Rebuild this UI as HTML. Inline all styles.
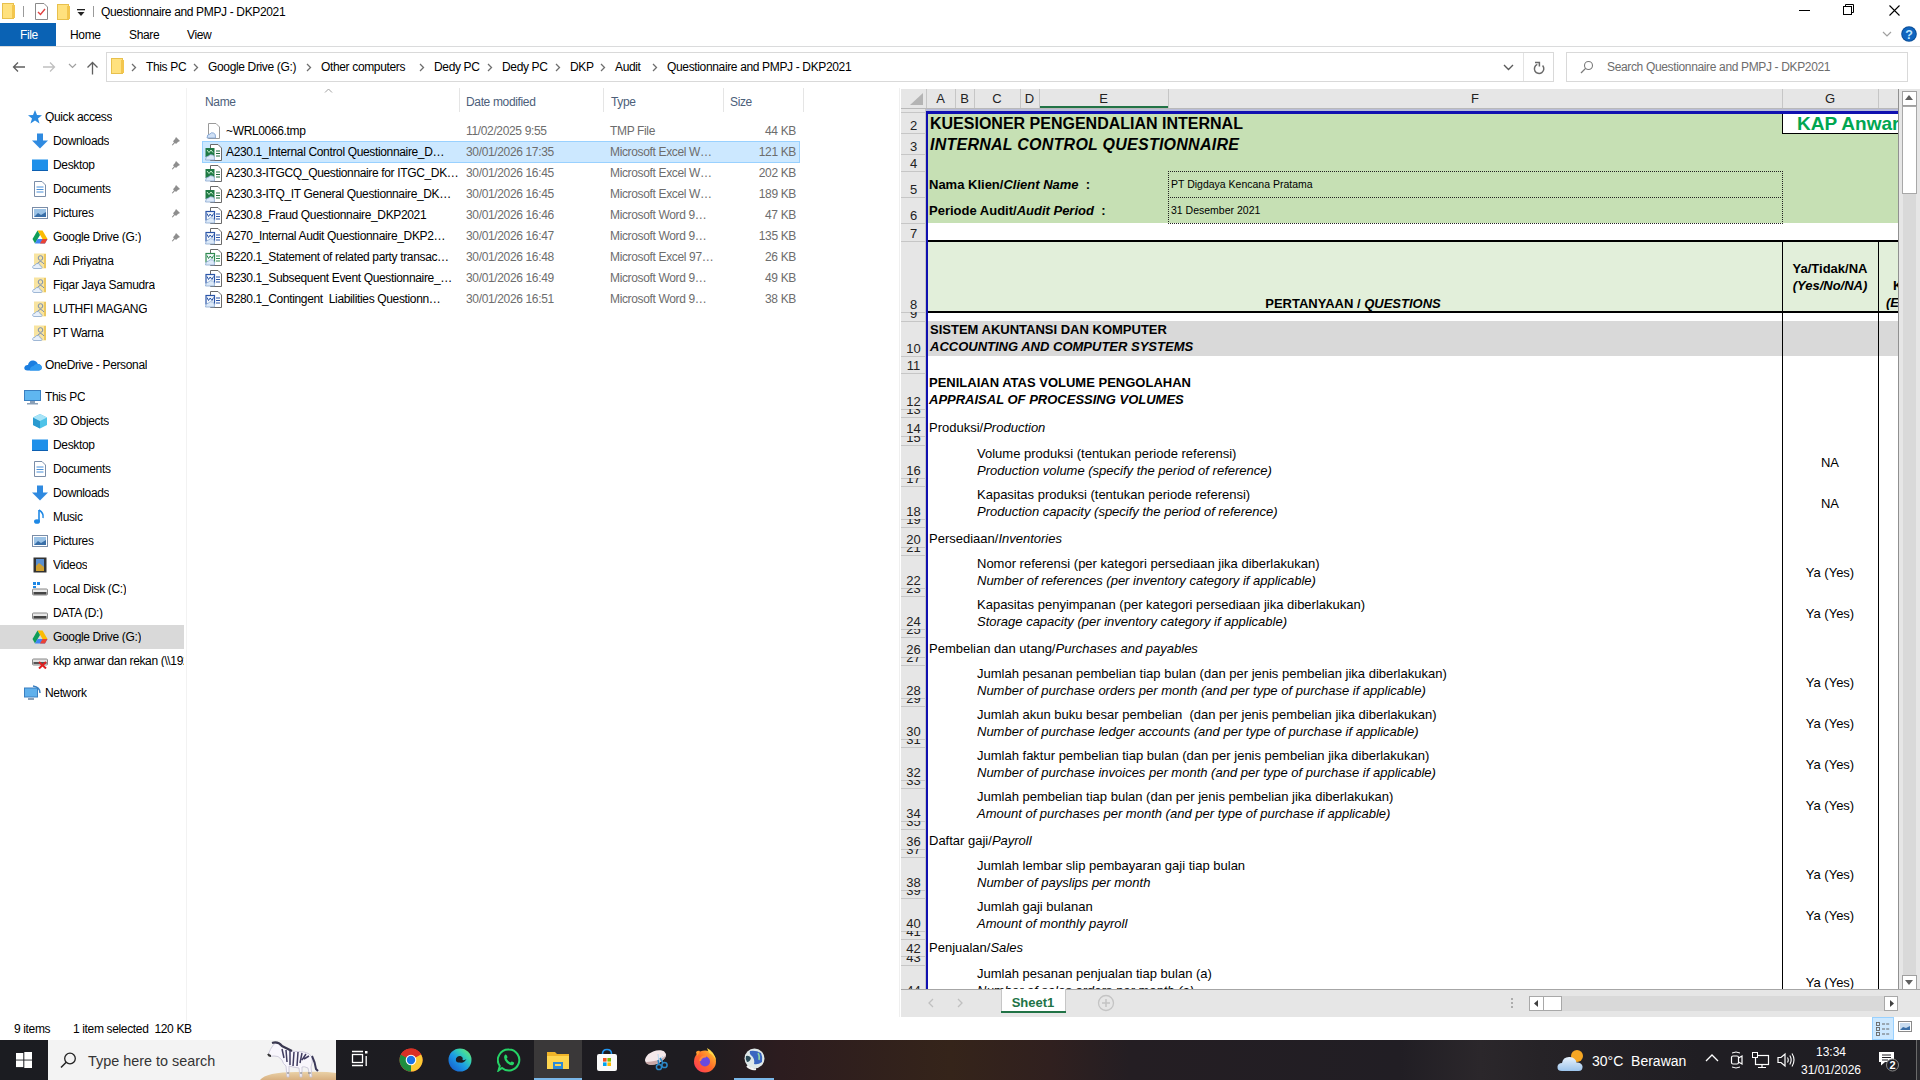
<!DOCTYPE html>
<html><head><meta charset="utf-8">
<style>
*{margin:0;padding:0;box-sizing:border-box}
html,body{width:1920px;height:1080px;overflow:hidden;background:#fff;font-family:"Liberation Sans",sans-serif;color:#000}
.a{position:absolute;white-space:nowrap}
.b{font-weight:bold}
.i{font-style:italic}
</style></head><body>
<svg class="a" style="left:2px;top:3px" width="14" height="16" viewBox="0 0 14 16"><rect x="0.5" y="0.5" width="11" height="15" fill="#ffe17e" stroke="#e8c04c"/><rect x="10" y="2" width="3" height="13" fill="#f3c64e"/></svg>
<div class="a" style="left:23px;top:6px;width:1px;height:11px;background:#9a9a9a"></div>
<svg class="a" style="left:35px;top:3px" width="13" height="17" viewBox="0 0 13 17"><path d="M0.5 0.5 H9 L12.5 4 V16.5 H0.5 Z" fill="#fff" stroke="#8a8a8a"/><path d="M3 9 L5.5 11.5 L10 6" stroke="#e04040" stroke-width="1.4" fill="none"/></svg>
<svg class="a" style="left:57px;top:4px" width="13" height="16" viewBox="0 0 13 16"><rect x="0.5" y="0.5" width="11" height="15" fill="#ffe17e" stroke="#e8c04c"/><rect x="10" y="2" width="3" height="13" fill="#f3c64e"/></svg>
<svg class="a" style="left:77px;top:9px" width="9" height="8" viewBox="0 0 9 8"><rect x="0" y="0" width="8" height="1.3" fill="#222"/><path d="M0.5 3 H7.5 L4 7 Z" fill="#222"/></svg>
<div class="a" style="left:93px;top:6px;width:1px;height:11px;background:#9a9a9a"></div>
<div class="a" style="left:101px;top:6.44px;font-size:12px;line-height:12px;letter-spacing:-0.35px;color:#000">Questionnaire and PMPJ - DKP2021</div>
<div class="a" style="left:1799px;top:10px;width:11px;height:1px;background:#000"></div>
<svg class="a" style="left:1843px;top:4px" width="12" height="12" viewBox="0 0 12 12"><rect x="0.5" y="2.5" width="8" height="8" fill="none" stroke="#000"/><path d="M2.5 2.5 V0.5 H10.5 V8.5 H8.5" fill="none" stroke="#000"/></svg>
<svg class="a" style="left:1889px;top:5px" width="12" height="12" viewBox="0 0 12 12"><path d="M0.5 0.5 L10.5 10.5 M10.5 0.5 L0.5 10.5" stroke="#000" stroke-width="1.1"/></svg>
<div class="a" style="left:0px;top:23px;width:56px;height:23px;background:#0a62b4"></div>
<div class="a" style="left:20px;top:29.44px;font-size:12px;line-height:12px;letter-spacing:-0.35px;color:#fff">File</div>
<div class="a" style="left:70px;top:29.44px;font-size:12px;line-height:12px;letter-spacing:-0.35px;">Home</div>
<div class="a" style="left:129px;top:29.44px;font-size:12px;line-height:12px;letter-spacing:-0.35px;">Share</div>
<div class="a" style="left:187px;top:29.44px;font-size:12px;line-height:12px;letter-spacing:-0.35px;">View</div>
<div class="a" style="left:0px;top:46px;width:1920px;height:1px;background:#dadbdc"></div>
<svg class="a" style="left:1882px;top:31px" width="10" height="7" viewBox="0 0 10 7"><path d="M1 1 L5 5 L9 1" stroke="#a0a0a0" stroke-width="1.2" fill="none"/></svg>
<svg class="a" style="left:1901px;top:26px" width="16" height="16" viewBox="0 0 16 16"><circle cx="8" cy="8" r="7.8" fill="#0a4e98"/><circle cx="8" cy="8" r="6.8" fill="#1066c0"/><text x="8" y="12.5" text-anchor="middle" font-family="Liberation Sans" font-weight="bold" font-size="12.5" fill="#bfe6ff">?</text></svg>
<svg class="a" style="left:12px;top:61px" width="14" height="12" viewBox="0 0 14 12"><path d="M13 6 H1.5 M6 1.5 L1.5 6 L6 10.5" stroke="#5f5f5f" stroke-width="1.3" fill="none"/></svg>
<svg class="a" style="left:42px;top:61px" width="14" height="12" viewBox="0 0 14 12"><path d="M1 6 H12.5 M8 1.5 L12.5 6 L8 10.5" stroke="#c0c0c0" stroke-width="1.3" fill="none"/></svg>
<svg class="a" style="left:68px;top:63px" width="9" height="6" viewBox="0 0 9 6"><path d="M1 1 L4.5 4.5 L8 1" stroke="#a0a0a0" stroke-width="1.2" fill="none"/></svg>
<svg class="a" style="left:86px;top:61px" width="13" height="14" viewBox="0 0 13 14"><path d="M6.5 13.5 V1.5 M1.5 6.5 L6.5 1.5 L11.5 6.5" stroke="#5f5f5f" stroke-width="1.3" fill="none"/></svg>
<div class="a" style="left:106px;top:52px;width:1448px;height:30px;border:1px solid #d9d9d9;background:#fff"></div>
<div class="a" style="left:1523px;top:53px;width:1px;height:28px;background:#e3e3e3"></div>
<svg class="a" style="left:111px;top:58px" width="14" height="16" viewBox="0 0 14 16"><rect x="0.5" y="0.5" width="11" height="15" fill="#ffe17e" stroke="#e8c04c"/><rect x="10" y="2" width="3" height="13" fill="#f3c64e"/></svg>
<svg class="a" style="left:131px;top:63px" width="6" height="9" viewBox="0 0 6 9"><path d="M1 1 L4.5 4.5 L1 8" stroke="#6e6e6e" stroke-width="1.3" fill="none"/></svg>
<div class="a" style="left:146px;top:61.44px;font-size:12px;line-height:12px;letter-spacing:-0.35px;color:#000">This PC</div>
<svg class="a" style="left:193px;top:63px" width="6" height="9" viewBox="0 0 6 9"><path d="M1 1 L4.5 4.5 L1 8" stroke="#6e6e6e" stroke-width="1.3" fill="none"/></svg>
<div class="a" style="left:208px;top:61.44px;font-size:12px;line-height:12px;letter-spacing:-0.35px;color:#000">Google Drive (G:)</div>
<svg class="a" style="left:306px;top:63px" width="6" height="9" viewBox="0 0 6 9"><path d="M1 1 L4.5 4.5 L1 8" stroke="#6e6e6e" stroke-width="1.3" fill="none"/></svg>
<div class="a" style="left:321px;top:61.44px;font-size:12px;line-height:12px;letter-spacing:-0.35px;color:#000">Other computers</div>
<svg class="a" style="left:419px;top:63px" width="6" height="9" viewBox="0 0 6 9"><path d="M1 1 L4.5 4.5 L1 8" stroke="#6e6e6e" stroke-width="1.3" fill="none"/></svg>
<div class="a" style="left:434px;top:61.44px;font-size:12px;line-height:12px;letter-spacing:-0.35px;color:#000">Dedy PC</div>
<svg class="a" style="left:487px;top:63px" width="6" height="9" viewBox="0 0 6 9"><path d="M1 1 L4.5 4.5 L1 8" stroke="#6e6e6e" stroke-width="1.3" fill="none"/></svg>
<div class="a" style="left:502px;top:61.44px;font-size:12px;line-height:12px;letter-spacing:-0.35px;color:#000">Dedy PC</div>
<svg class="a" style="left:555px;top:63px" width="6" height="9" viewBox="0 0 6 9"><path d="M1 1 L4.5 4.5 L1 8" stroke="#6e6e6e" stroke-width="1.3" fill="none"/></svg>
<div class="a" style="left:570px;top:61.44px;font-size:12px;line-height:12px;letter-spacing:-0.35px;color:#000">DKP</div>
<svg class="a" style="left:599.5px;top:63px" width="6" height="9" viewBox="0 0 6 9"><path d="M1 1 L4.5 4.5 L1 8" stroke="#6e6e6e" stroke-width="1.3" fill="none"/></svg>
<div class="a" style="left:615px;top:61.44px;font-size:12px;line-height:12px;letter-spacing:-0.35px;color:#000">Audit</div>
<svg class="a" style="left:652px;top:63px" width="6" height="9" viewBox="0 0 6 9"><path d="M1 1 L4.5 4.5 L1 8" stroke="#6e6e6e" stroke-width="1.3" fill="none"/></svg>
<div class="a" style="left:667px;top:61.44px;font-size:12px;line-height:12px;letter-spacing:-0.35px;color:#000">Questionnaire and PMPJ - DKP2021</div>
<svg class="a" style="left:1503px;top:64px" width="11" height="7" viewBox="0 0 11 7"><path d="M1 1 L5.5 5.5 L10 1" stroke="#5a5a5a" stroke-width="1.4" fill="none"/></svg>
<svg class="a" style="left:1528px;top:56px" width="24" height="24" viewBox="0 0 24 24"><path d="M9.3 8.4 A4.7 4.7 0 1 0 14.6 9.6" stroke="#6a6a6a" stroke-width="1.5" fill="none"/><path d="M7 6.4 H11.4 V10.6" stroke="#6a6a6a" stroke-width="1.5" fill="none"/></svg>
<div class="a" style="left:1566px;top:52px;width:342px;height:30px;border:1px solid #d9d9d9;background:#fff"></div>
<svg class="a" style="left:1580px;top:60px" width="14" height="14" viewBox="0 0 14 14"><circle cx="8.5" cy="5.5" r="4" stroke="#7a7a7a" stroke-width="1.1" fill="none"/><path d="M5.6 8.4 L1 13" stroke="#7a7a7a" stroke-width="1.3"/></svg>
<div class="a" style="left:1607px;top:61.44px;font-size:12px;line-height:12px;letter-spacing:-0.35px;color:#6d6d6d">Search Questionnaire and PMPJ - DKP2021</div>
<div class="a" style="left:0px;top:625px;width:184px;height:24px;background:#d9d9d9"></div>
<svg class="a" style="left:27px;top:109px" width="16" height="16" viewBox="0 0 16 16"><path d="M8 1 L10 6 L15 6.3 L11 9.5 L12.5 14.5 L8 11.5 L3.5 14.5 L5 9.5 L1 6.3 L6 6 Z" fill="#2a8ae0"/></svg>
<div class="a" style="left:45px;top:111.44px;font-size:12px;line-height:12px;letter-spacing:-0.35px;color:#000;max-width:139px;overflow:hidden">Quick access</div>
<svg class="a" style="left:32px;top:133px" width="16" height="16" viewBox="0 0 16 16"><rect x="5" y="0.5" width="6" height="8" fill="#2f8ae0"/><path d="M0 7.5 H16 L8 15.5 Z" fill="#2f8ae0"/></svg>
<div class="a" style="left:53px;top:135.44px;font-size:12px;line-height:12px;letter-spacing:-0.35px;color:#000;max-width:131px;overflow:hidden">Downloads</div>
<svg class="a" style="left:171px;top:136px" width="10" height="10" viewBox="0 0 10 10"><path d="M5 1 L9 5 L7 6 L5 8 L4 7 L1.5 9.5 L0.8 9 L3 6.3 L2 5.3 L4 3 Z" fill="#8e8e8e"/></svg>
<svg class="a" style="left:32px;top:157px" width="16" height="16" viewBox="0 0 16 16"><rect x="0" y="2.5" width="16" height="11.5" fill="#1e90ea"/><rect x="0" y="13" width="16" height="1" fill="#0d5fb0"/></svg>
<div class="a" style="left:53px;top:159.44px;font-size:12px;line-height:12px;letter-spacing:-0.35px;color:#000;max-width:131px;overflow:hidden">Desktop</div>
<svg class="a" style="left:171px;top:160px" width="10" height="10" viewBox="0 0 10 10"><path d="M5 1 L9 5 L7 6 L5 8 L4 7 L1.5 9.5 L0.8 9 L3 6.3 L2 5.3 L4 3 Z" fill="#8e8e8e"/></svg>
<svg class="a" style="left:32px;top:181px" width="16" height="16" viewBox="0 0 16 16"><path d="M2.5 0.5 H10 L13.5 4 V15.5 H2.5 Z" fill="#fff" stroke="#7a8da8"/><path d="M4.5 6 H11.5 M4.5 8.5 H11.5 M4.5 11 H11.5" stroke="#4a90d9" stroke-width="1"/></svg>
<div class="a" style="left:53px;top:183.44px;font-size:12px;line-height:12px;letter-spacing:-0.35px;color:#000;max-width:131px;overflow:hidden">Documents</div>
<svg class="a" style="left:171px;top:184px" width="10" height="10" viewBox="0 0 10 10"><path d="M5 1 L9 5 L7 6 L5 8 L4 7 L1.5 9.5 L0.8 9 L3 6.3 L2 5.3 L4 3 Z" fill="#8e8e8e"/></svg>
<svg class="a" style="left:32px;top:205px" width="16" height="16" viewBox="0 0 16 16"><rect x="0.5" y="2.5" width="15" height="11" fill="#fff" stroke="#7a8da8"/><rect x="2" y="4" width="12" height="8" fill="#9cc3e6"/><path d="M2 12 L6 8 L9 10 L14 7 V12 Z" fill="#3a6fa8"/></svg>
<div class="a" style="left:53px;top:207.44px;font-size:12px;line-height:12px;letter-spacing:-0.35px;color:#000;max-width:131px;overflow:hidden">Pictures</div>
<svg class="a" style="left:171px;top:208px" width="10" height="10" viewBox="0 0 10 10"><path d="M5 1 L9 5 L7 6 L5 8 L4 7 L1.5 9.5 L0.8 9 L3 6.3 L2 5.3 L4 3 Z" fill="#8e8e8e"/></svg>
<svg class="a" style="left:32px;top:229px" width="16" height="16" viewBox="0 0 16 16"><path d="M5.5 1.5 H10.5 L15.5 10 H10.5 Z" fill="#fbbc04"/><path d="M5.5 1.5 L0.5 10 L3 14.5 L8 6 Z" fill="#0f9d58"/><path d="M3 14.5 H13 L15.5 10 H5.5 Z" fill="#4285f4"/><path d="M10.5 10 H15.5 L13 14.5 H8 Z" fill="#ea4335"/></svg>
<div class="a" style="left:53px;top:231.44px;font-size:12px;line-height:12px;letter-spacing:-0.35px;color:#000;max-width:131px;overflow:hidden">Google Drive (G:)</div>
<svg class="a" style="left:171px;top:232px" width="10" height="10" viewBox="0 0 10 10"><path d="M5 1 L9 5 L7 6 L5 8 L4 7 L1.5 9.5 L0.8 9 L3 6.3 L2 5.3 L4 3 Z" fill="#8e8e8e"/></svg>
<svg class="a" style="left:32px;top:253px" width="16" height="16" viewBox="0 0 16 16"><rect x="2" y="0.5" width="12" height="15" fill="#f8e4a0"/><rect x="12" y="1" width="2" height="14" fill="#ecc860"/><circle cx="8.5" cy="5" r="2.3" fill="none" stroke="#7a8fb0" stroke-width="1"/><path d="M5 11 Q8.5 6 12 11" fill="none" stroke="#7a8fb0" stroke-width="1"/><path d="M1.5 15.5 Q0.5 15.5 0.8 13.5 Q1.2 12 3 12.3 Q3.8 10 6.2 10.5 Q8.2 11 8.3 13 Q10 13 10 14.5 Q10 15.5 9 15.5 Z" fill="#e8f0fa" stroke="#8aa8d0" stroke-width="0.8"/></svg>
<div class="a" style="left:53px;top:255.44px;font-size:12px;line-height:12px;letter-spacing:-0.35px;color:#000;max-width:131px;overflow:hidden">Adi Priyatna</div>
<svg class="a" style="left:32px;top:277px" width="16" height="16" viewBox="0 0 16 16"><rect x="2" y="0.5" width="12" height="15" fill="#f8e4a0"/><rect x="12" y="1" width="2" height="14" fill="#ecc860"/><circle cx="8.5" cy="5" r="2.3" fill="none" stroke="#7a8fb0" stroke-width="1"/><path d="M5 11 Q8.5 6 12 11" fill="none" stroke="#7a8fb0" stroke-width="1"/><path d="M1.5 15.5 Q0.5 15.5 0.8 13.5 Q1.2 12 3 12.3 Q3.8 10 6.2 10.5 Q8.2 11 8.3 13 Q10 13 10 14.5 Q10 15.5 9 15.5 Z" fill="#e8f0fa" stroke="#8aa8d0" stroke-width="0.8"/></svg>
<div class="a" style="left:53px;top:279.44px;font-size:12px;line-height:12px;letter-spacing:-0.35px;color:#000;max-width:131px;overflow:hidden">Figar Jaya Samudra</div>
<svg class="a" style="left:32px;top:301px" width="16" height="16" viewBox="0 0 16 16"><rect x="2" y="0.5" width="12" height="15" fill="#f8e4a0"/><rect x="12" y="1" width="2" height="14" fill="#ecc860"/><circle cx="8.5" cy="5" r="2.3" fill="none" stroke="#7a8fb0" stroke-width="1"/><path d="M5 11 Q8.5 6 12 11" fill="none" stroke="#7a8fb0" stroke-width="1"/><path d="M1.5 15.5 Q0.5 15.5 0.8 13.5 Q1.2 12 3 12.3 Q3.8 10 6.2 10.5 Q8.2 11 8.3 13 Q10 13 10 14.5 Q10 15.5 9 15.5 Z" fill="#e8f0fa" stroke="#8aa8d0" stroke-width="0.8"/></svg>
<div class="a" style="left:53px;top:303.44px;font-size:12px;line-height:12px;letter-spacing:-0.35px;color:#000;max-width:131px;overflow:hidden">LUTHFI MAGANG</div>
<svg class="a" style="left:32px;top:325px" width="16" height="16" viewBox="0 0 16 16"><rect x="2" y="0.5" width="12" height="15" fill="#f8e4a0"/><rect x="12" y="1" width="2" height="14" fill="#ecc860"/><circle cx="8.5" cy="5" r="2.3" fill="none" stroke="#7a8fb0" stroke-width="1"/><path d="M5 11 Q8.5 6 12 11" fill="none" stroke="#7a8fb0" stroke-width="1"/><path d="M1.5 15.5 Q0.5 15.5 0.8 13.5 Q1.2 12 3 12.3 Q3.8 10 6.2 10.5 Q8.2 11 8.3 13 Q10 13 10 14.5 Q10 15.5 9 15.5 Z" fill="#e8f0fa" stroke="#8aa8d0" stroke-width="0.8"/></svg>
<div class="a" style="left:53px;top:327.44px;font-size:12px;line-height:12px;letter-spacing:-0.35px;color:#000;max-width:131px;overflow:hidden">PT Warna</div>
<svg class="a" style="left:24px;top:357px" width="18" height="16" viewBox="0 0 18 16"><path d="M3.5 13.5 Q0 13.5 0.3 10.5 Q0.8 7.5 4 8 Q5 3 9.5 3.5 Q13 4 13.8 7 Q17.5 7 17.8 10.5 Q17.8 13.5 14.5 13.5 Z" fill="#1a7ee0"/><path d="M6 13.5 Q5.5 9.5 9.5 9 Q11 6.5 14 7.2 Q17.5 7.5 17.8 10.5 Q17.8 13.5 14.5 13.5 Z" fill="#2f9af0"/></svg>
<div class="a" style="left:45px;top:359.44px;font-size:12px;line-height:12px;letter-spacing:-0.35px;color:#000;max-width:139px;overflow:hidden">OneDrive - Personal</div>
<svg class="a" style="left:24px;top:389px" width="17" height="16" viewBox="0 0 17 16"><rect x="0.5" y="1.5" width="16" height="10" fill="#5fb6f0" stroke="#3a7fc0"/><rect x="6" y="12" width="5" height="2" fill="#8aa0b8"/><rect x="3" y="14" width="11" height="1.5" fill="#8aa0b8"/></svg>
<div class="a" style="left:45px;top:391.44px;font-size:12px;line-height:12px;letter-spacing:-0.35px;color:#000;max-width:139px;overflow:hidden">This PC</div>
<svg class="a" style="left:32px;top:413px" width="16" height="16" viewBox="0 0 16 16"><path d="M8 1 L15 4.5 V12 L8 15.5 L1 12 V4.5 Z" fill="#4fc3e8"/><path d="M8 8 V15.5 L1 12 V4.5 Z" fill="#2a9ad0"/><path d="M8 1 L15 4.5 L8 8 L1 4.5 Z" fill="#a8e4f8"/></svg>
<div class="a" style="left:53px;top:415.44px;font-size:12px;line-height:12px;letter-spacing:-0.35px;color:#000;max-width:131px;overflow:hidden">3D Objects</div>
<svg class="a" style="left:32px;top:437px" width="16" height="16" viewBox="0 0 16 16"><rect x="0" y="2.5" width="16" height="11.5" fill="#1e90ea"/><rect x="0" y="13" width="16" height="1" fill="#0d5fb0"/></svg>
<div class="a" style="left:53px;top:439.44px;font-size:12px;line-height:12px;letter-spacing:-0.35px;color:#000;max-width:131px;overflow:hidden">Desktop</div>
<svg class="a" style="left:32px;top:461px" width="16" height="16" viewBox="0 0 16 16"><path d="M2.5 0.5 H10 L13.5 4 V15.5 H2.5 Z" fill="#fff" stroke="#7a8da8"/><path d="M4.5 6 H11.5 M4.5 8.5 H11.5 M4.5 11 H11.5" stroke="#4a90d9" stroke-width="1"/></svg>
<div class="a" style="left:53px;top:463.44px;font-size:12px;line-height:12px;letter-spacing:-0.35px;color:#000;max-width:131px;overflow:hidden">Documents</div>
<svg class="a" style="left:32px;top:485px" width="16" height="16" viewBox="0 0 16 16"><rect x="5" y="0.5" width="6" height="8" fill="#2f8ae0"/><path d="M0 7.5 H16 L8 15.5 Z" fill="#2f8ae0"/></svg>
<div class="a" style="left:53px;top:487.44px;font-size:12px;line-height:12px;letter-spacing:-0.35px;color:#000;max-width:131px;overflow:hidden">Downloads</div>
<svg class="a" style="left:32px;top:509px" width="16" height="16" viewBox="0 0 16 16"><path d="M7 1 V12" stroke="#1e88e5" stroke-width="1.6"/><ellipse cx="5" cy="12.5" rx="3" ry="2.3" fill="#1e88e5"/><path d="M7 1 Q12 4 11 9" stroke="#1e88e5" stroke-width="1.5" fill="none"/></svg>
<div class="a" style="left:53px;top:511.44px;font-size:12px;line-height:12px;letter-spacing:-0.35px;color:#000;max-width:131px;overflow:hidden">Music</div>
<svg class="a" style="left:32px;top:533px" width="16" height="16" viewBox="0 0 16 16"><rect x="0.5" y="2.5" width="15" height="11" fill="#fff" stroke="#7a8da8"/><rect x="2" y="4" width="12" height="8" fill="#9cc3e6"/><path d="M2 12 L6 8 L9 10 L14 7 V12 Z" fill="#3a6fa8"/></svg>
<div class="a" style="left:53px;top:535.44px;font-size:12px;line-height:12px;letter-spacing:-0.35px;color:#000;max-width:131px;overflow:hidden">Pictures</div>
<svg class="a" style="left:32px;top:557px" width="16" height="16" viewBox="0 0 16 16"><rect x="1.5" y="0.5" width="13" height="15" fill="#333"/><rect x="4" y="2" width="8" height="12" fill="#5a8fd0"/><path d="M4 9 L7 6 L12 10 V14 H4Z" fill="#d0a030"/></svg>
<div class="a" style="left:53px;top:559.44px;font-size:12px;line-height:12px;letter-spacing:-0.35px;color:#000;max-width:131px;overflow:hidden">Videos</div>
<svg class="a" style="left:32px;top:581px" width="16" height="16" viewBox="0 0 16 16"><rect x="0.5" y="8" width="15" height="6" rx="1" fill="#e8e8e8" stroke="#888"/><rect x="1.5" y="11" width="13" height="2.5" fill="#444"/><rect x="1" y="1" width="3" height="3" fill="#1e88e5"/><rect x="5" y="1" width="3" height="3" fill="#1e88e5"/><rect x="1" y="5" width="3" height="2" fill="#1e88e5"/></svg>
<div class="a" style="left:53px;top:583.44px;font-size:12px;line-height:12px;letter-spacing:-0.35px;color:#000;max-width:131px;overflow:hidden">Local Disk (C:)</div>
<svg class="a" style="left:32px;top:605px" width="16" height="16" viewBox="0 0 16 16"><rect x="0.5" y="8" width="15" height="6" rx="1" fill="#e8e8e8" stroke="#888"/><rect x="1.5" y="11" width="13" height="2.5" fill="#444"/></svg>
<div class="a" style="left:53px;top:607.44px;font-size:12px;line-height:12px;letter-spacing:-0.35px;color:#000;max-width:131px;overflow:hidden">DATA (D:)</div>
<svg class="a" style="left:32px;top:629px" width="16" height="16" viewBox="0 0 16 16"><path d="M5.5 1.5 H10.5 L15.5 10 H10.5 Z" fill="#fbbc04"/><path d="M5.5 1.5 L0.5 10 L3 14.5 L8 6 Z" fill="#0f9d58"/><path d="M3 14.5 H13 L15.5 10 H5.5 Z" fill="#4285f4"/><path d="M10.5 10 H15.5 L13 14.5 H8 Z" fill="#ea4335"/></svg>
<div class="a" style="left:53px;top:631.44px;font-size:12px;line-height:12px;letter-spacing:-0.35px;color:#000;max-width:131px;overflow:hidden">Google Drive (G:)</div>
<svg class="a" style="left:32px;top:653px" width="16" height="16" viewBox="0 0 16 16"><rect x="0.5" y="6" width="15" height="6" rx="1" fill="#e0e0e0" stroke="#888"/><rect x="1.5" y="9" width="13" height="2" fill="#555"/><path d="M7 9 L14 15.5 M14 9 L7 15.5" stroke="#e02020" stroke-width="2"/></svg>
<div class="a" style="left:53px;top:655.44px;font-size:12px;line-height:12px;letter-spacing:-0.35px;color:#000;max-width:131px;overflow:hidden">kkp anwar dan rekan (\\192.168</div>
<svg class="a" style="left:24px;top:685px" width="18" height="16" viewBox="0 0 18 16"><rect x="0.5" y="3" width="13" height="9" fill="#5fb0ec" stroke="#3a7fc0"/><path d="M9 1 Q16 2 16 8" stroke="#3a7fc0" stroke-width="1.5" fill="none"/><rect x="4" y="13" width="6" height="2" fill="#8aa0b8"/></svg>
<div class="a" style="left:45px;top:687.44px;font-size:12px;line-height:12px;letter-spacing:-0.35px;color:#000;max-width:139px;overflow:hidden">Network</div>
<div class="a" style="left:186px;top:88px;width:1px;height:940px;background:#f2f2f2"></div>
<div class="a" style="left:205px;top:96.44px;font-size:12px;line-height:12px;letter-spacing:-0.35px;color:#4c607a">Name</div>
<div class="a" style="left:466px;top:96.44px;font-size:12px;line-height:12px;letter-spacing:-0.35px;color:#4c607a">Date modified</div>
<div class="a" style="left:611px;top:96.44px;font-size:12px;line-height:12px;letter-spacing:-0.35px;color:#4c607a">Type</div>
<div class="a" style="left:730px;top:96.44px;font-size:12px;line-height:12px;letter-spacing:-0.35px;color:#4c607a">Size</div>
<div class="a" style="left:459px;top:88px;width:1px;height:24px;background:#e5e5e5"></div>
<div class="a" style="left:603px;top:88px;width:1px;height:24px;background:#e5e5e5"></div>
<div class="a" style="left:723px;top:88px;width:1px;height:24px;background:#e5e5e5"></div>
<div class="a" style="left:803px;top:88px;width:1px;height:24px;background:#e5e5e5"></div>
<div class="a" style="left:899px;top:88px;width:1px;height:929px;background:#efefef"></div>
<svg class="a" style="left:324px;top:88px" width="9" height="5" viewBox="0 0 9 5"><path d="M1 4.5 L4.5 1 L8 4.5" stroke="#a0a0a0" stroke-width="1" fill="none"/></svg>
<div class="a" style="left:202px;top:141px;width:598px;height:22px;background:#cce8ff;border:1px solid #99d1ff"></div>
<svg class="a" style="left:206px;top:122.5px" width="16" height="16" viewBox="0 0 16 16"><path d="M2.5 0.5 H10 L13.5 4 V15.5 H2.5 Z" fill="#fff" stroke="#9a9a9a"/><path d="M1 15 Q1 11 4 11 Q5 9 7.5 10 Q10 10.5 9.5 15 Z" fill="#cfe0f5" stroke="#7a9ccc" stroke-width="0.8"/></svg>
<div class="a" style="left:226px;top:124.94px;font-size:12px;line-height:12px;letter-spacing:-0.35px;color:#000">~WRL0066.tmp</div>
<div class="a" style="left:466px;top:124.94px;font-size:12px;line-height:12px;letter-spacing:-0.35px;color:#6d6d6d">11/02/2025 9:55</div>
<div class="a" style="left:610px;top:124.94px;font-size:12px;line-height:12px;letter-spacing:-0.35px;color:#6d6d6d">TMP File</div>
<div class="a" style="left:596px;top:124.94px;width:200px;text-align:right;font-size:12px;line-height:12px;letter-spacing:-0.35px;color:#6d6d6d">44 KB</div>
<svg class="a" style="left:204px;top:143.5px" width="18" height="17" viewBox="0 0 18 17"><path d="M6.5 0.5 H14 L17.5 4 V16.5 H6.5 Z" fill="#fff" stroke="#6a6a6a"/><path d="M12 7 H16 M12 9.5 H16 M12 12 H16" stroke="#1d6a3a" stroke-width="1.1"/><rect x="1.5" y="4" width="9" height="9" fill="#1f7a44"/><path d="M3 6 L5 8.5 L7 6 L9 8.5" stroke="#c8f0d0" stroke-width="1" fill="none"/><path d="M1.5 16 Q1.5 12 4.5 12 Q6 10 8.5 11 Q11 11.5 10.5 16 Z" fill="#dce9f8" stroke="#8aa8d0" stroke-width="0.8"/></svg>
<div class="a" style="left:226px;top:145.94px;font-size:12px;line-height:12px;letter-spacing:-0.35px;color:#000">A230.1_Internal Control Questionnaire_D…</div>
<div class="a" style="left:466px;top:145.94px;font-size:12px;line-height:12px;letter-spacing:-0.35px;color:#6d6d6d">30/01/2026 17:35</div>
<div class="a" style="left:610px;top:145.94px;font-size:12px;line-height:12px;letter-spacing:-0.35px;color:#6d6d6d">Microsoft Excel W…</div>
<div class="a" style="left:596px;top:145.94px;width:200px;text-align:right;font-size:12px;line-height:12px;letter-spacing:-0.35px;color:#6d6d6d">121 KB</div>
<svg class="a" style="left:204px;top:164.5px" width="18" height="17" viewBox="0 0 18 17"><path d="M6.5 0.5 H14 L17.5 4 V16.5 H6.5 Z" fill="#fff" stroke="#6a6a6a"/><path d="M12 7 H16 M12 9.5 H16 M12 12 H16" stroke="#1d6a3a" stroke-width="1.1"/><rect x="1.5" y="4" width="9" height="9" fill="#1f7a44"/><path d="M3 6 L5 8.5 L7 6 L9 8.5" stroke="#c8f0d0" stroke-width="1" fill="none"/><path d="M1.5 16 Q1.5 12 4.5 12 Q6 10 8.5 11 Q11 11.5 10.5 16 Z" fill="#dce9f8" stroke="#8aa8d0" stroke-width="0.8"/></svg>
<div class="a" style="left:226px;top:166.94px;font-size:12px;line-height:12px;letter-spacing:-0.35px;color:#000">A230.3-ITGCQ_Questionnaire for ITGC_DK…</div>
<div class="a" style="left:466px;top:166.94px;font-size:12px;line-height:12px;letter-spacing:-0.35px;color:#6d6d6d">30/01/2026 16:45</div>
<div class="a" style="left:610px;top:166.94px;font-size:12px;line-height:12px;letter-spacing:-0.35px;color:#6d6d6d">Microsoft Excel W…</div>
<div class="a" style="left:596px;top:166.94px;width:200px;text-align:right;font-size:12px;line-height:12px;letter-spacing:-0.35px;color:#6d6d6d">202 KB</div>
<svg class="a" style="left:204px;top:185.5px" width="18" height="17" viewBox="0 0 18 17"><path d="M6.5 0.5 H14 L17.5 4 V16.5 H6.5 Z" fill="#fff" stroke="#6a6a6a"/><path d="M12 7 H16 M12 9.5 H16 M12 12 H16" stroke="#1d6a3a" stroke-width="1.1"/><rect x="1.5" y="4" width="9" height="9" fill="#1f7a44"/><path d="M3 6 L5 8.5 L7 6 L9 8.5" stroke="#c8f0d0" stroke-width="1" fill="none"/><path d="M1.5 16 Q1.5 12 4.5 12 Q6 10 8.5 11 Q11 11.5 10.5 16 Z" fill="#dce9f8" stroke="#8aa8d0" stroke-width="0.8"/></svg>
<div class="a" style="left:226px;top:187.94px;font-size:12px;line-height:12px;letter-spacing:-0.35px;color:#000">A230.3-ITQ_IT General Questionnaire_DK…</div>
<div class="a" style="left:466px;top:187.94px;font-size:12px;line-height:12px;letter-spacing:-0.35px;color:#6d6d6d">30/01/2026 16:45</div>
<div class="a" style="left:610px;top:187.94px;font-size:12px;line-height:12px;letter-spacing:-0.35px;color:#6d6d6d">Microsoft Excel W…</div>
<div class="a" style="left:596px;top:187.94px;width:200px;text-align:right;font-size:12px;line-height:12px;letter-spacing:-0.35px;color:#6d6d6d">189 KB</div>
<svg class="a" style="left:204px;top:206.5px" width="18" height="17" viewBox="0 0 18 17"><path d="M6.5 0.5 H14 L17.5 4 V16.5 H6.5 Z" fill="#fff" stroke="#6a6a6a"/><path d="M12 7 H16 M12 9.5 H16 M12 12 H16" stroke="#2a55a8" stroke-width="1.1"/><rect x="2" y="4.5" width="8.5" height="8.5" fill="#f4f8fc" stroke="#2a55a8" stroke-width="1.2"/><path d="M3 6.5 L4.5 9.5 L6.2 7 L8 9.5 L9.5 6.5" stroke="#2a55a8" stroke-width="1" fill="none"/><path d="M1.5 16 Q1.5 12 4.5 12 Q6 10 8.5 11 Q11 11.5 10.5 16 Z" fill="#dce9f8" stroke="#8aa8d0" stroke-width="0.8"/></svg>
<div class="a" style="left:226px;top:208.94px;font-size:12px;line-height:12px;letter-spacing:-0.35px;color:#000">A230.8_Fraud Questionnaire_DKP2021</div>
<div class="a" style="left:466px;top:208.94px;font-size:12px;line-height:12px;letter-spacing:-0.35px;color:#6d6d6d">30/01/2026 16:46</div>
<div class="a" style="left:610px;top:208.94px;font-size:12px;line-height:12px;letter-spacing:-0.35px;color:#6d6d6d">Microsoft Word 9…</div>
<div class="a" style="left:596px;top:208.94px;width:200px;text-align:right;font-size:12px;line-height:12px;letter-spacing:-0.35px;color:#6d6d6d">47 KB</div>
<svg class="a" style="left:204px;top:227.5px" width="18" height="17" viewBox="0 0 18 17"><path d="M6.5 0.5 H14 L17.5 4 V16.5 H6.5 Z" fill="#fff" stroke="#6a6a6a"/><path d="M12 7 H16 M12 9.5 H16 M12 12 H16" stroke="#2a55a8" stroke-width="1.1"/><rect x="2" y="4.5" width="8.5" height="8.5" fill="#f4f8fc" stroke="#2a55a8" stroke-width="1.2"/><path d="M3 6.5 L4.5 9.5 L6.2 7 L8 9.5 L9.5 6.5" stroke="#2a55a8" stroke-width="1" fill="none"/><path d="M1.5 16 Q1.5 12 4.5 12 Q6 10 8.5 11 Q11 11.5 10.5 16 Z" fill="#dce9f8" stroke="#8aa8d0" stroke-width="0.8"/></svg>
<div class="a" style="left:226px;top:229.94px;font-size:12px;line-height:12px;letter-spacing:-0.35px;color:#000">A270_Internal Audit Questionnaire_DKP2…</div>
<div class="a" style="left:466px;top:229.94px;font-size:12px;line-height:12px;letter-spacing:-0.35px;color:#6d6d6d">30/01/2026 16:47</div>
<div class="a" style="left:610px;top:229.94px;font-size:12px;line-height:12px;letter-spacing:-0.35px;color:#6d6d6d">Microsoft Word 9…</div>
<div class="a" style="left:596px;top:229.94px;width:200px;text-align:right;font-size:12px;line-height:12px;letter-spacing:-0.35px;color:#6d6d6d">135 KB</div>
<svg class="a" style="left:204px;top:248.5px" width="18" height="17" viewBox="0 0 18 17"><path d="M6.5 0.5 H14 L17.5 4 V16.5 H6.5 Z" fill="#fff" stroke="#6a6a6a"/><path d="M12 7 H16 M12 9.5 H16 M12 12 H16" stroke="#2f8a50" stroke-width="1.1"/><rect x="2" y="4.5" width="8.5" height="8.5" fill="#f4f8fc" stroke="#2f8a50" stroke-width="1.2"/><path d="M3 6.5 L4.5 9.5 L6.2 7 L8 9.5 L9.5 6.5" stroke="#2f8a50" stroke-width="1" fill="none"/><path d="M1.5 16 Q1.5 12 4.5 12 Q6 10 8.5 11 Q11 11.5 10.5 16 Z" fill="#dce9f8" stroke="#8aa8d0" stroke-width="0.8"/></svg>
<div class="a" style="left:226px;top:250.94px;font-size:12px;line-height:12px;letter-spacing:-0.35px;color:#000">B220.1_Statement of related party transac…</div>
<div class="a" style="left:466px;top:250.94px;font-size:12px;line-height:12px;letter-spacing:-0.35px;color:#6d6d6d">30/01/2026 16:48</div>
<div class="a" style="left:610px;top:250.94px;font-size:12px;line-height:12px;letter-spacing:-0.35px;color:#6d6d6d">Microsoft Excel 97…</div>
<div class="a" style="left:596px;top:250.94px;width:200px;text-align:right;font-size:12px;line-height:12px;letter-spacing:-0.35px;color:#6d6d6d">26 KB</div>
<svg class="a" style="left:204px;top:269.5px" width="18" height="17" viewBox="0 0 18 17"><path d="M6.5 0.5 H14 L17.5 4 V16.5 H6.5 Z" fill="#fff" stroke="#6a6a6a"/><path d="M12 7 H16 M12 9.5 H16 M12 12 H16" stroke="#2a55a8" stroke-width="1.1"/><rect x="2" y="4.5" width="8.5" height="8.5" fill="#f4f8fc" stroke="#2a55a8" stroke-width="1.2"/><path d="M3 6.5 L4.5 9.5 L6.2 7 L8 9.5 L9.5 6.5" stroke="#2a55a8" stroke-width="1" fill="none"/><path d="M1.5 16 Q1.5 12 4.5 12 Q6 10 8.5 11 Q11 11.5 10.5 16 Z" fill="#dce9f8" stroke="#8aa8d0" stroke-width="0.8"/></svg>
<div class="a" style="left:226px;top:271.94px;font-size:12px;line-height:12px;letter-spacing:-0.35px;color:#000">B230.1_Subsequent Event Questionnaire_…</div>
<div class="a" style="left:466px;top:271.94px;font-size:12px;line-height:12px;letter-spacing:-0.35px;color:#6d6d6d">30/01/2026 16:49</div>
<div class="a" style="left:610px;top:271.94px;font-size:12px;line-height:12px;letter-spacing:-0.35px;color:#6d6d6d">Microsoft Word 9…</div>
<div class="a" style="left:596px;top:271.94px;width:200px;text-align:right;font-size:12px;line-height:12px;letter-spacing:-0.35px;color:#6d6d6d">49 KB</div>
<svg class="a" style="left:204px;top:290.5px" width="18" height="17" viewBox="0 0 18 17"><path d="M6.5 0.5 H14 L17.5 4 V16.5 H6.5 Z" fill="#fff" stroke="#6a6a6a"/><path d="M12 7 H16 M12 9.5 H16 M12 12 H16" stroke="#2a55a8" stroke-width="1.1"/><rect x="2" y="4.5" width="8.5" height="8.5" fill="#f4f8fc" stroke="#2a55a8" stroke-width="1.2"/><path d="M3 6.5 L4.5 9.5 L6.2 7 L8 9.5 L9.5 6.5" stroke="#2a55a8" stroke-width="1" fill="none"/><path d="M1.5 16 Q1.5 12 4.5 12 Q6 10 8.5 11 Q11 11.5 10.5 16 Z" fill="#dce9f8" stroke="#8aa8d0" stroke-width="0.8"/></svg>
<div class="a" style="left:226px;top:292.94px;font-size:12px;line-height:12px;letter-spacing:-0.35px;color:#000">B280.1_Contingent&nbsp; Liabilities Questionn…</div>
<div class="a" style="left:466px;top:292.94px;font-size:12px;line-height:12px;letter-spacing:-0.35px;color:#6d6d6d">30/01/2026 16:51</div>
<div class="a" style="left:610px;top:292.94px;font-size:12px;line-height:12px;letter-spacing:-0.35px;color:#6d6d6d">Microsoft Word 9…</div>
<div class="a" style="left:596px;top:292.94px;width:200px;text-align:right;font-size:12px;line-height:12px;letter-spacing:-0.35px;color:#6d6d6d">38 KB</div>
<div class="a" style="left:14px;top:1022.94px;font-size:12px;line-height:12px;letter-spacing:-0.35px;color:#000">9 items</div>
<div class="a" style="left:73px;top:1022.94px;font-size:12px;line-height:12px;letter-spacing:-0.35px;color:#000">1 item selected&nbsp; 120 KB</div>
<div class="a" style="left:1872px;top:1017px;width:22px;height:23px;background:#cce8ff;border:1px solid #99d1ff"></div>
<svg class="a" style="left:1875px;top:1021px" width="16" height="16" viewBox="0 0 16 16"><rect x="1.5" y="1.5" width="3" height="3" fill="none" stroke="#666" stroke-width="0.9"/><rect x="1.5" y="6.5" width="3" height="3" fill="none" stroke="#666" stroke-width="0.9"/><rect x="1.5" y="11.5" width="3" height="3" fill="none" stroke="#666" stroke-width="0.9"/><path d="M7 3 H15 M7 8 H15 M7 13 H15" stroke="#666" stroke-width="1" stroke-dasharray="3 1.2"/></svg>
<svg class="a" style="left:1898px;top:1021px" width="15" height="12" viewBox="0 0 15 12"><rect x="0.5" y="0.5" width="13" height="10" fill="#fff" stroke="#8a8a8a"/><rect x="2" y="2" width="10" height="7" fill="#c8dcf0"/><path d="M2 9 L5 6 L8 7 L12 5 V9 Z" fill="#3a6fa8"/></svg>
<div class="a" style="left:0;top:0;width:1898px;height:989px;overflow:hidden">
<div class="a" style="left:901px;top:89px;width:997px;height:20px;background:#e6e6e6"></div>
<div class="a" style="left:901px;top:108px;width:997px;height:1px;background:#b9b9b9"></div>
<div class="a" style="left:1039px;top:106px;width:129px;height:2px;background:#217346"></div>
<div class="a" style="left:926px;top:89px;width:1px;height:19px;background:#c6c6c6"></div>
<div class="a" style="left:955px;top:89px;width:1px;height:19px;background:#c6c6c6"></div>
<div class="a" style="left:974px;top:89px;width:1px;height:19px;background:#c6c6c6"></div>
<div class="a" style="left:1020px;top:89px;width:1px;height:19px;background:#c6c6c6"></div>
<div class="a" style="left:1039px;top:89px;width:1px;height:19px;background:#c6c6c6"></div>
<div class="a" style="left:1168px;top:89px;width:1px;height:19px;background:#c6c6c6"></div>
<div class="a" style="left:1782px;top:89px;width:1px;height:19px;background:#c6c6c6"></div>
<div class="a" style="left:1878px;top:89px;width:1px;height:19px;background:#c6c6c6"></div>
<svg class="a" style="left:908px;top:92px" width="16" height="14"><polygon points="15,1 15,13 2,13" fill="#b4b4b4"/></svg>
<div class="a " style="left:840.5px;top:92.00px;width:200px;text-align:center;font-size:13px;line-height:13px;color:#222">A</div>
<div class="a " style="left:864.5px;top:92.00px;width:200px;text-align:center;font-size:13px;line-height:13px;color:#222">B</div>
<div class="a " style="left:897.0px;top:92.00px;width:200px;text-align:center;font-size:13px;line-height:13px;color:#222">C</div>
<div class="a " style="left:929.5px;top:92.00px;width:200px;text-align:center;font-size:13px;line-height:13px;color:#222">D</div>
<div class="a " style="left:1003.5px;top:92.00px;width:200px;text-align:center;font-size:13px;line-height:13px;color:#222">E</div>
<div class="a " style="left:1375.0px;top:92.00px;width:200px;text-align:center;font-size:13px;line-height:13px;color:#222">F</div>
<div class="a " style="left:1730.0px;top:92.00px;width:200px;text-align:center;font-size:13px;line-height:13px;color:#222">G</div>
<div class="a" style="left:901px;top:109px;width:25px;height:880px;background:#e6e6e6"></div>
<div class="a" style="left:925px;top:109px;width:1px;height:880px;background:#c6c6c6"></div>
<div class="a" style="left:901px;top:133px;width:25px;height:1px;background:#c6c6c6"></div>
<div class="a" style="left:901px;top:111px;width:25px;height:21px;overflow:hidden"><div class="a" style="left:0;top:8px;width:25px;text-align:center;font-size:13px;line-height:13px;color:#222">2</div></div>
<div class="a" style="left:901px;top:154px;width:25px;height:1px;background:#c6c6c6"></div>
<div class="a" style="left:901px;top:133px;width:25px;height:20px;overflow:hidden"><div class="a" style="left:0;top:7px;width:25px;text-align:center;font-size:13px;line-height:13px;color:#222">3</div></div>
<div class="a" style="left:901px;top:171px;width:25px;height:1px;background:#c6c6c6"></div>
<div class="a" style="left:901px;top:154px;width:25px;height:16px;overflow:hidden"><div class="a" style="left:0;top:3px;width:25px;text-align:center;font-size:13px;line-height:13px;color:#222">4</div></div>
<div class="a" style="left:901px;top:197px;width:25px;height:1px;background:#c6c6c6"></div>
<div class="a" style="left:901px;top:171px;width:25px;height:25px;overflow:hidden"><div class="a" style="left:0;top:12px;width:25px;text-align:center;font-size:13px;line-height:13px;color:#222">5</div></div>
<div class="a" style="left:901px;top:223px;width:25px;height:1px;background:#c6c6c6"></div>
<div class="a" style="left:901px;top:197px;width:25px;height:25px;overflow:hidden"><div class="a" style="left:0;top:12px;width:25px;text-align:center;font-size:13px;line-height:13px;color:#222">6</div></div>
<div class="a" style="left:901px;top:241px;width:25px;height:1px;background:#c6c6c6"></div>
<div class="a" style="left:901px;top:223px;width:25px;height:17px;overflow:hidden"><div class="a" style="left:0;top:4px;width:25px;text-align:center;font-size:13px;line-height:13px;color:#222">7</div></div>
<div class="a" style="left:901px;top:312px;width:25px;height:1px;background:#c6c6c6"></div>
<div class="a" style="left:901px;top:241px;width:25px;height:70px;overflow:hidden"><div class="a" style="left:0;top:57px;width:25px;text-align:center;font-size:13px;line-height:13px;color:#222">8</div></div>
<div class="a" style="left:901px;top:321px;width:25px;height:1px;background:#c6c6c6"></div>
<div class="a" style="left:901px;top:312px;width:25px;height:8px;overflow:hidden"><div class="a" style="left:0;top:-5px;width:25px;text-align:center;font-size:13px;line-height:13px;color:#222">9</div></div>
<div class="a" style="left:901px;top:356px;width:25px;height:1px;background:#c6c6c6"></div>
<div class="a" style="left:901px;top:321px;width:25px;height:34px;overflow:hidden"><div class="a" style="left:0;top:21px;width:25px;text-align:center;font-size:13px;line-height:13px;color:#222">10</div></div>
<div class="a" style="left:901px;top:373px;width:25px;height:1px;background:#c6c6c6"></div>
<div class="a" style="left:901px;top:356px;width:25px;height:16px;overflow:hidden"><div class="a" style="left:0;top:3px;width:25px;text-align:center;font-size:13px;line-height:13px;color:#222">11</div></div>
<div class="a" style="left:901px;top:409px;width:25px;height:1px;background:#c6c6c6"></div>
<div class="a" style="left:901px;top:373px;width:25px;height:35px;overflow:hidden"><div class="a" style="left:0;top:22px;width:25px;text-align:center;font-size:13px;line-height:13px;color:#222">12</div></div>
<div class="a" style="left:901px;top:417px;width:25px;height:1px;background:#c6c6c6"></div>
<div class="a" style="left:901px;top:409px;width:25px;height:7px;overflow:hidden"><div class="a" style="left:0;top:-6px;width:25px;text-align:center;font-size:13px;line-height:13px;color:#222">13</div></div>
<div class="a" style="left:901px;top:436px;width:25px;height:1px;background:#c6c6c6"></div>
<div class="a" style="left:901px;top:417px;width:25px;height:18px;overflow:hidden"><div class="a" style="left:0;top:5px;width:25px;text-align:center;font-size:13px;line-height:13px;color:#222">14</div></div>
<div class="a" style="left:901px;top:445px;width:25px;height:1px;background:#c6c6c6"></div>
<div class="a" style="left:901px;top:436px;width:25px;height:8px;overflow:hidden"><div class="a" style="left:0;top:-5px;width:25px;text-align:center;font-size:13px;line-height:13px;color:#222">15</div></div>
<div class="a" style="left:901px;top:478px;width:25px;height:1px;background:#c6c6c6"></div>
<div class="a" style="left:901px;top:445px;width:25px;height:32px;overflow:hidden"><div class="a" style="left:0;top:19px;width:25px;text-align:center;font-size:13px;line-height:13px;color:#222">16</div></div>
<div class="a" style="left:901px;top:486px;width:25px;height:1px;background:#c6c6c6"></div>
<div class="a" style="left:901px;top:478px;width:25px;height:7px;overflow:hidden"><div class="a" style="left:0;top:-6px;width:25px;text-align:center;font-size:13px;line-height:13px;color:#222">17</div></div>
<div class="a" style="left:901px;top:519px;width:25px;height:1px;background:#c6c6c6"></div>
<div class="a" style="left:901px;top:486px;width:25px;height:32px;overflow:hidden"><div class="a" style="left:0;top:19px;width:25px;text-align:center;font-size:13px;line-height:13px;color:#222">18</div></div>
<div class="a" style="left:901px;top:527px;width:25px;height:1px;background:#c6c6c6"></div>
<div class="a" style="left:901px;top:519px;width:25px;height:7px;overflow:hidden"><div class="a" style="left:0;top:-6px;width:25px;text-align:center;font-size:13px;line-height:13px;color:#222">19</div></div>
<div class="a" style="left:901px;top:547px;width:25px;height:1px;background:#c6c6c6"></div>
<div class="a" style="left:901px;top:527px;width:25px;height:19px;overflow:hidden"><div class="a" style="left:0;top:6px;width:25px;text-align:center;font-size:13px;line-height:13px;color:#222">20</div></div>
<div class="a" style="left:901px;top:555px;width:25px;height:1px;background:#c6c6c6"></div>
<div class="a" style="left:901px;top:547px;width:25px;height:7px;overflow:hidden"><div class="a" style="left:0;top:-6px;width:25px;text-align:center;font-size:13px;line-height:13px;color:#222">21</div></div>
<div class="a" style="left:901px;top:588px;width:25px;height:1px;background:#c6c6c6"></div>
<div class="a" style="left:901px;top:555px;width:25px;height:32px;overflow:hidden"><div class="a" style="left:0;top:19px;width:25px;text-align:center;font-size:13px;line-height:13px;color:#222">22</div></div>
<div class="a" style="left:901px;top:596px;width:25px;height:1px;background:#c6c6c6"></div>
<div class="a" style="left:901px;top:588px;width:25px;height:7px;overflow:hidden"><div class="a" style="left:0;top:-6px;width:25px;text-align:center;font-size:13px;line-height:13px;color:#222">23</div></div>
<div class="a" style="left:901px;top:629px;width:25px;height:1px;background:#c6c6c6"></div>
<div class="a" style="left:901px;top:596px;width:25px;height:32px;overflow:hidden"><div class="a" style="left:0;top:19px;width:25px;text-align:center;font-size:13px;line-height:13px;color:#222">24</div></div>
<div class="a" style="left:901px;top:637px;width:25px;height:1px;background:#c6c6c6"></div>
<div class="a" style="left:901px;top:629px;width:25px;height:7px;overflow:hidden"><div class="a" style="left:0;top:-6px;width:25px;text-align:center;font-size:13px;line-height:13px;color:#222">25</div></div>
<div class="a" style="left:901px;top:657px;width:25px;height:1px;background:#c6c6c6"></div>
<div class="a" style="left:901px;top:637px;width:25px;height:19px;overflow:hidden"><div class="a" style="left:0;top:6px;width:25px;text-align:center;font-size:13px;line-height:13px;color:#222">26</div></div>
<div class="a" style="left:901px;top:665px;width:25px;height:1px;background:#c6c6c6"></div>
<div class="a" style="left:901px;top:657px;width:25px;height:7px;overflow:hidden"><div class="a" style="left:0;top:-6px;width:25px;text-align:center;font-size:13px;line-height:13px;color:#222">27</div></div>
<div class="a" style="left:901px;top:698px;width:25px;height:1px;background:#c6c6c6"></div>
<div class="a" style="left:901px;top:665px;width:25px;height:32px;overflow:hidden"><div class="a" style="left:0;top:19px;width:25px;text-align:center;font-size:13px;line-height:13px;color:#222">28</div></div>
<div class="a" style="left:901px;top:706px;width:25px;height:1px;background:#c6c6c6"></div>
<div class="a" style="left:901px;top:698px;width:25px;height:7px;overflow:hidden"><div class="a" style="left:0;top:-6px;width:25px;text-align:center;font-size:13px;line-height:13px;color:#222">29</div></div>
<div class="a" style="left:901px;top:739px;width:25px;height:1px;background:#c6c6c6"></div>
<div class="a" style="left:901px;top:706px;width:25px;height:32px;overflow:hidden"><div class="a" style="left:0;top:19px;width:25px;text-align:center;font-size:13px;line-height:13px;color:#222">30</div></div>
<div class="a" style="left:901px;top:747px;width:25px;height:1px;background:#c6c6c6"></div>
<div class="a" style="left:901px;top:739px;width:25px;height:7px;overflow:hidden"><div class="a" style="left:0;top:-6px;width:25px;text-align:center;font-size:13px;line-height:13px;color:#222">31</div></div>
<div class="a" style="left:901px;top:780px;width:25px;height:1px;background:#c6c6c6"></div>
<div class="a" style="left:901px;top:747px;width:25px;height:32px;overflow:hidden"><div class="a" style="left:0;top:19px;width:25px;text-align:center;font-size:13px;line-height:13px;color:#222">32</div></div>
<div class="a" style="left:901px;top:788px;width:25px;height:1px;background:#c6c6c6"></div>
<div class="a" style="left:901px;top:780px;width:25px;height:7px;overflow:hidden"><div class="a" style="left:0;top:-6px;width:25px;text-align:center;font-size:13px;line-height:13px;color:#222">33</div></div>
<div class="a" style="left:901px;top:821px;width:25px;height:1px;background:#c6c6c6"></div>
<div class="a" style="left:901px;top:788px;width:25px;height:32px;overflow:hidden"><div class="a" style="left:0;top:19px;width:25px;text-align:center;font-size:13px;line-height:13px;color:#222">34</div></div>
<div class="a" style="left:901px;top:829px;width:25px;height:1px;background:#c6c6c6"></div>
<div class="a" style="left:901px;top:821px;width:25px;height:7px;overflow:hidden"><div class="a" style="left:0;top:-6px;width:25px;text-align:center;font-size:13px;line-height:13px;color:#222">35</div></div>
<div class="a" style="left:901px;top:849px;width:25px;height:1px;background:#c6c6c6"></div>
<div class="a" style="left:901px;top:829px;width:25px;height:19px;overflow:hidden"><div class="a" style="left:0;top:6px;width:25px;text-align:center;font-size:13px;line-height:13px;color:#222">36</div></div>
<div class="a" style="left:901px;top:857px;width:25px;height:1px;background:#c6c6c6"></div>
<div class="a" style="left:901px;top:849px;width:25px;height:7px;overflow:hidden"><div class="a" style="left:0;top:-6px;width:25px;text-align:center;font-size:13px;line-height:13px;color:#222">37</div></div>
<div class="a" style="left:901px;top:890px;width:25px;height:1px;background:#c6c6c6"></div>
<div class="a" style="left:901px;top:857px;width:25px;height:32px;overflow:hidden"><div class="a" style="left:0;top:19px;width:25px;text-align:center;font-size:13px;line-height:13px;color:#222">38</div></div>
<div class="a" style="left:901px;top:898px;width:25px;height:1px;background:#c6c6c6"></div>
<div class="a" style="left:901px;top:890px;width:25px;height:7px;overflow:hidden"><div class="a" style="left:0;top:-6px;width:25px;text-align:center;font-size:13px;line-height:13px;color:#222">39</div></div>
<div class="a" style="left:901px;top:931px;width:25px;height:1px;background:#c6c6c6"></div>
<div class="a" style="left:901px;top:898px;width:25px;height:32px;overflow:hidden"><div class="a" style="left:0;top:19px;width:25px;text-align:center;font-size:13px;line-height:13px;color:#222">40</div></div>
<div class="a" style="left:901px;top:939px;width:25px;height:1px;background:#c6c6c6"></div>
<div class="a" style="left:901px;top:931px;width:25px;height:7px;overflow:hidden"><div class="a" style="left:0;top:-6px;width:25px;text-align:center;font-size:13px;line-height:13px;color:#222">41</div></div>
<div class="a" style="left:901px;top:956px;width:25px;height:1px;background:#c6c6c6"></div>
<div class="a" style="left:901px;top:939px;width:25px;height:16px;overflow:hidden"><div class="a" style="left:0;top:3px;width:25px;text-align:center;font-size:13px;line-height:13px;color:#222">42</div></div>
<div class="a" style="left:901px;top:965px;width:25px;height:1px;background:#c6c6c6"></div>
<div class="a" style="left:901px;top:956px;width:25px;height:8px;overflow:hidden"><div class="a" style="left:0;top:-5px;width:25px;text-align:center;font-size:13px;line-height:13px;color:#222">43</div></div>
<div class="a" style="left:901px;top:998px;width:25px;height:1px;background:#c6c6c6"></div>
<div class="a" style="left:901px;top:965px;width:25px;height:32px;overflow:hidden"><div class="a" style="left:0;top:19px;width:25px;text-align:center;font-size:13px;line-height:13px;color:#222">44</div></div>
<div class="a" style="left:928px;top:113px;width:970px;height:110px;background:#c6e0b4"></div>
<div class="a" style="left:1782px;top:114px;width:116px;height:20px;background:#fff;border-left:1px solid #000;border-bottom:1px solid #000"></div>
<div class="a b" style="left:1797px;top:113.92px;font-size:19px;line-height:19px;color:#00a651">KAP Anwar dan Rekan</div>
<div class="a" style="left:1168px;top:171px;width:615px;height:27px;border:1px dotted #222"></div>
<div class="a" style="left:1168px;top:197px;width:615px;height:27px;border:1px dotted #222"></div>
<div class="a" style="left:928px;top:241px;width:970px;height:71px;background:#e2efda"></div>
<div class="a" style="left:928px;top:240px;width:970px;height:2px;background:#000"></div>
<div class="a" style="left:928px;top:311px;width:970px;height:2px;background:#000"></div>
<div class="a" style="left:928px;top:321px;width:970px;height:35px;background:#d9d9d9"></div>
<div class="a" style="left:1782px;top:241px;width:1px;height:748px;background:#000"></div>
<div class="a" style="left:1878px;top:241px;width:1px;height:748px;background:#000"></div>
<div class="a" style="left:926px;top:109px;width:972px;height:2px;background:#b8bcd8"></div>
<div class="a" style="left:901px;top:112px;width:25px;height:1px;background:#c6c6c6"></div>
<div class="a" style="left:926px;top:111px;width:972px;height:3px;background:#1010b0"></div>
<div class="a" style="left:926px;top:111px;width:2px;height:878px;background:#1010b0"></div>
<div class="a b" style="left:930px;top:116.46px;font-size:16px;line-height:16px;">KUESIONER PENGENDALIAN INTERNAL</div>
<div class="a b i" style="left:930px;top:137.46px;font-size:16px;line-height:16px;letter-spacing:0.25px">INTERNAL CONTROL QUESTIONNAIRE</div>
<div class="a b" style="left:929px;top:178.00px;font-size:13px;line-height:13px;">Nama Klien/<i>Client Name</i>&nbsp; :</div>
<div class="a b" style="left:929px;top:204.00px;font-size:13px;line-height:13px;">Periode Audit/<i>Audit Period</i>&nbsp; :</div>
<div class="a " style="left:1171px;top:179.11px;font-size:10.5px;line-height:10.5px;">PT Digdaya Kencana Pratama</div>
<div class="a " style="left:1171px;top:205.11px;font-size:10.5px;line-height:10.5px;">31 Desember 2021</div>
<div class="a b" style="left:1153.0px;top:297.00px;width:400px;text-align:center;font-size:13px;line-height:13px;">PERTANYAAN / <i>QUESTIONS</i></div>
<div class="a b" style="left:1730.0px;top:262.00px;width:200px;text-align:center;font-size:13px;line-height:13px;">Ya/Tidak/NA</div>
<div class="a b" style="left:1730.0px;top:279.00px;width:200px;text-align:center;font-size:13px;line-height:13px;"><i>(Yes/No/NA)</i></div>
<div class="a b" style="left:1893px;top:279.00px;font-size:13px;line-height:13px;">Keterangan</div>
<div class="a b" style="left:1886px;top:296.00px;font-size:13px;line-height:13px;"><i>(Explanation)</i></div>
<div class="a b" style="left:930px;top:323.00px;font-size:13px;line-height:13px;">SISTEM AKUNTANSI DAN KOMPUTER</div>
<div class="a b i" style="left:930px;top:339.50px;font-size:13px;line-height:13px;">ACCOUNTING AND COMPUTER SYSTEMS</div>
<div class="a b" style="left:929px;top:376.00px;font-size:13px;line-height:13px;">PENILAIAN ATAS VOLUME PENGOLAHAN</div>
<div class="a b i" style="left:929px;top:393.00px;font-size:13px;line-height:13px;">APPRAISAL OF PROCESSING VOLUMES</div>
<div class="a " style="left:929px;top:420.50px;font-size:13px;line-height:13px;">Produksi/<i>Production</i></div>
<div class="a " style="left:977px;top:446.70px;font-size:13px;line-height:13px;">Volume produksi (tentukan periode referensi)</div>
<div class="a i" style="left:977px;top:463.50px;font-size:13px;line-height:13px;">Production volume (specify the period of reference)</div>
<div class="a " style="left:1730.0px;top:455.80px;width:200px;text-align:center;font-size:13px;line-height:13px;">NA</div>
<div class="a " style="left:977px;top:487.70px;font-size:13px;line-height:13px;">Kapasitas produksi (tentukan periode referensi)</div>
<div class="a i" style="left:977px;top:504.50px;font-size:13px;line-height:13px;">Production capacity (specify the period of reference)</div>
<div class="a " style="left:1730.0px;top:496.80px;width:200px;text-align:center;font-size:13px;line-height:13px;">NA</div>
<div class="a " style="left:929px;top:531.50px;font-size:13px;line-height:13px;">Persediaan/<i>Inventories</i></div>
<div class="a " style="left:977px;top:556.70px;font-size:13px;line-height:13px;">Nomor referensi (per kategori persediaan jika diberlakukan)</div>
<div class="a i" style="left:977px;top:573.50px;font-size:13px;line-height:13px;">Number of references (per inventory category if applicable)</div>
<div class="a " style="left:1730.0px;top:565.80px;width:200px;text-align:center;font-size:13px;line-height:13px;">Ya (Yes)</div>
<div class="a " style="left:977px;top:597.70px;font-size:13px;line-height:13px;">Kapasitas penyimpanan (per kategori persediaan jika diberlakukan)</div>
<div class="a i" style="left:977px;top:614.50px;font-size:13px;line-height:13px;">Storage capacity (per inventory category if applicable)</div>
<div class="a " style="left:1730.0px;top:606.80px;width:200px;text-align:center;font-size:13px;line-height:13px;">Ya (Yes)</div>
<div class="a " style="left:929px;top:641.50px;font-size:13px;line-height:13px;">Pembelian dan utang/<i>Purchases and payables</i></div>
<div class="a " style="left:977px;top:666.70px;font-size:13px;line-height:13px;">Jumlah pesanan pembelian tiap bulan (dan per jenis pembelian jika diberlakukan)</div>
<div class="a i" style="left:977px;top:683.50px;font-size:13px;line-height:13px;">Number of purchase orders per month (and per type of purchase if applicable)</div>
<div class="a " style="left:1730.0px;top:675.80px;width:200px;text-align:center;font-size:13px;line-height:13px;">Ya (Yes)</div>
<div class="a " style="left:977px;top:707.70px;font-size:13px;line-height:13px;">Jumlah akun buku besar pembelian&nbsp; (dan per jenis pembelian jika diberlakukan)</div>
<div class="a i" style="left:977px;top:724.50px;font-size:13px;line-height:13px;">Number of purchase ledger accounts (and per type of purchase if applicable)</div>
<div class="a " style="left:1730.0px;top:716.80px;width:200px;text-align:center;font-size:13px;line-height:13px;">Ya (Yes)</div>
<div class="a " style="left:977px;top:748.70px;font-size:13px;line-height:13px;">Jumlah faktur pembelian tiap bulan (dan per jenis pembelian jika diberlakukan)</div>
<div class="a i" style="left:977px;top:765.50px;font-size:13px;line-height:13px;">Number of purchase invoices per month (and per type of purchase if applicable)</div>
<div class="a " style="left:1730.0px;top:757.80px;width:200px;text-align:center;font-size:13px;line-height:13px;">Ya (Yes)</div>
<div class="a " style="left:977px;top:789.70px;font-size:13px;line-height:13px;">Jumlah pembelian tiap bulan (dan per jenis pembelian jika diberlakukan)</div>
<div class="a i" style="left:977px;top:806.50px;font-size:13px;line-height:13px;">Amount of purchases per month (and per type of purchase if applicable)</div>
<div class="a " style="left:1730.0px;top:798.80px;width:200px;text-align:center;font-size:13px;line-height:13px;">Ya (Yes)</div>
<div class="a " style="left:929px;top:833.50px;font-size:13px;line-height:13px;">Daftar gaji/<i>Payroll</i></div>
<div class="a " style="left:977px;top:858.70px;font-size:13px;line-height:13px;">Jumlah lembar slip pembayaran gaji tiap bulan</div>
<div class="a i" style="left:977px;top:875.50px;font-size:13px;line-height:13px;">Number of payslips per month</div>
<div class="a " style="left:1730.0px;top:867.80px;width:200px;text-align:center;font-size:13px;line-height:13px;">Ya (Yes)</div>
<div class="a " style="left:977px;top:899.70px;font-size:13px;line-height:13px;">Jumlah gaji bulanan</div>
<div class="a i" style="left:977px;top:916.50px;font-size:13px;line-height:13px;">Amount of monthly payroll</div>
<div class="a " style="left:1730.0px;top:908.80px;width:200px;text-align:center;font-size:13px;line-height:13px;">Ya (Yes)</div>
<div class="a " style="left:929px;top:940.50px;font-size:13px;line-height:13px;">Penjualan/<i>Sales</i></div>
<div class="a " style="left:977px;top:966.70px;font-size:13px;line-height:13px;">Jumlah pesanan penjualan tiap bulan (a)</div>
<div class="a i" style="left:977px;top:983.50px;font-size:13px;line-height:13px;">Number of sales orders per month (a)</div>
<div class="a " style="left:1730.0px;top:975.80px;width:200px;text-align:center;font-size:13px;line-height:13px;">Ya (Yes)</div>
</div>
<div class="a" style="left:1898px;top:89px;width:22px;height:900px;background:#e6e6e6"></div>
<div class="a" style="left:1903px;top:106px;width:13px;height:870px;background:#d9d9d9"></div>
<div class="a" style="left:1898px;top:89px;width:1px;height:900px;background:#909090"></div>
<div class="a" style="left:1902px;top:91px;width:15px;height:15px;background:#fff;border:1px solid #a0a0a0"></div>
<svg class="a" style="left:1904px;top:94px" width="10" height="8"><polygon points="5,1 9,6 1,6" fill="#606060"/></svg>
<div class="a" style="left:1902px;top:106px;width:15px;height:88px;background:#fff;border:1px solid #a8a8a8"></div>
<div class="a" style="left:1902px;top:975px;width:15px;height:15px;background:#fff;border:1px solid #a0a0a0"></div>
<svg class="a" style="left:1904px;top:978px" width="10" height="8"><polygon points="1,2 9,2 5,7" fill="#606060"/></svg>
<div class="a" style="left:901px;top:989px;width:1019px;height:28px;background:#e6e6e6"></div>
<div class="a" style="left:901px;top:989px;width:1019px;height:1px;background:#a6a6a6"></div>
<div class="a" style="left:1001px;top:989px;width:65px;height:24px;background:#fff;border-left:1px solid #c6c6c6;border-right:1px solid #c6c6c6"></div>
<div class="a" style="left:1001px;top:1011px;width:65px;height:2px;background:#217346"></div>
<div class="a b" style="left:1001.0px;top:996.00px;width:64px;text-align:center;font-size:13px;line-height:13px;color:#217346">Sheet1</div>
<svg class="a" style="left:925px;top:996px" width="50" height="14"><path d="M8 3 L4 7 L8 11" stroke="#c0c0c0" stroke-width="1.3" fill="none"/><path d="M33 3 L37 7 L33 11" stroke="#c0c0c0" stroke-width="1.3" fill="none"/></svg>
<svg class="a" style="left:1097px;top:994px" width="18" height="18"><circle cx="9" cy="9" r="7.5" stroke="#c4c4c4" stroke-width="1.3" fill="none"/><path d="M9 5 V13 M5 9 H13" stroke="#c4c4c4" stroke-width="1.5"/></svg>
<svg class="a" style="left:1510px;top:996px" width="4" height="14"><circle cx="2" cy="3" r="1" fill="#999"/><circle cx="2" cy="7" r="1" fill="#999"/><circle cx="2" cy="11" r="1" fill="#999"/></svg>
<div class="a" style="left:1529px;top:996px;width:369px;height:15px;background:#d9d9d9"></div>
<div class="a" style="left:1529px;top:996px;width:15px;height:15px;background:#fff;border:1px solid #a8a8a8"></div>
<svg class="a" style="left:1532px;top:999px" width="10" height="10"><polygon points="2,4.5 6,1 6,8" fill="#404040"/></svg>
<div class="a" style="left:1543px;top:996px;width:19px;height:15px;background:#fff;border:1px solid #a8a8a8"></div>
<div class="a" style="left:1884px;top:996px;width:14px;height:15px;background:#fff;border:1px solid #a8a8a8"></div>
<svg class="a" style="left:1886px;top:999px" width="10" height="10"><polygon points="8,4.5 4,1 4,8" fill="#404040"/></svg>
<div class="a" style="left:0px;top:1040px;width:1920px;height:40px;background:linear-gradient(90deg,#1b1c21 0px,#1e1c21 700px,#2c1c1f 780px,#35241a 950px,#30201f 1050px,#241e23 1130px,#211e24 1400px,#2b272b 1480px,#262327 1540px,#201e23 1700px,#1f1e23 1920px)"></div>
<svg class="a" style="left:16px;top:1052px" width="16" height="16" viewBox="0 0 16 16"><rect x="0" y="1" width="7.3" height="6.6" fill="#fff"/><rect x="8.3" y="0" width="7.7" height="7.6" fill="#fff"/><rect x="0" y="8.5" width="7.3" height="6.6" fill="#fff"/><rect x="8.3" y="8.5" width="7.7" height="7.5" fill="#fff"/></svg>
<div class="a" style="left:48px;top:1040px;width:288px;height:40px;background:#f3f3f3"></div>
<svg class="a" style="left:60px;top:1052px" width="17" height="17" viewBox="0 0 17 17"><circle cx="10" cy="6.5" r="5.3" stroke="#222" stroke-width="1.3" fill="none"/><path d="M6.2 10.3 L1 15.5" stroke="#222" stroke-width="1.5"/></svg>
<div class="a" style="left:88px;top:1053.81px;font-size:14.4px;line-height:14.4px;color:#333">Type here to search</div>
<svg class="a" style="left:256px;top:1040px" width="80" height="40" viewBox="0 0 80 40"><defs><linearGradient id="sand" x1="0" y1="0" x2="0" y2="1"><stop offset="0" stop-color="#ead2a8"/><stop offset="1" stop-color="#d8b080"/></linearGradient></defs><path d="M4 40 Q10 32 40 32 Q70 31 80 33 V40 Z" fill="url(#sand)"/><path d="M12 15 Q14 9 18 4 Q21 2 24 4 Q30 8 34 11 L48 12 Q54 13 56 17 Q57 22 55 27 L56 37 H54 L52 28 Q48 26 46 27 L46 37 H44 L43 28 Q36 27 33 26 L33 37 H31 L30 26 Q27 24 26 20 Q22 15 18 16 Q14 17 12 15 Z" fill="#f8f6fc" stroke="#c4c0d4" stroke-width="0.8"/><path d="M16 3 Q22 1 26 6 L36 11" stroke="#3a3850" stroke-width="2.2" fill="none"/><path d="M12 14 Q13 16 15 16" stroke="#333" stroke-width="2" fill="none"/><path d="M26 9 L28 18 M30 10 L31 22 M34 11 L34 25 M38 12 L37 26 M42 12 L41 26 M46 13 L44 23 M50 14 L46 20 M53 16 L48 19" stroke="#403c60" stroke-width="1.5"/><path d="M56 16 Q59 22 60 29 L62 31" stroke="#3a3858" stroke-width="2" fill="none"/><path d="M31 33 H33 M44 33 H46 M52 33 H55" stroke="#777" stroke-width="1.2"/></svg>
<svg class="a" style="left:351px;top:1050px" width="18" height="17" viewBox="0 0 18 17"><rect x="1.5" y="4.5" width="10" height="8" fill="none" stroke="#fff" stroke-width="1.3"/><path d="M1 1.5 H12 M1 15.5 H12" stroke="#fff" stroke-width="1.3"/><rect x="14" y="1" width="2.5" height="2.5" fill="#fff"/><path d="M15.2 6 V16" stroke="#fff" stroke-width="1.3"/></svg>
<svg class="a" style="left:399px;top:1048px" width="24" height="24" viewBox="0 0 24 24"><circle cx="12" cy="12" r="11.5" fill="#db4437"/><path d="M12 12 L22 6.2 A11.5 11.5 0 0 1 12 23.5 Z" fill="#fcc934"/><path d="M12 12 L12 23.5 A11.5 11.5 0 0 1 1.9 6.5 Z" fill="#1e8e3e"/><path d="M12 12 L1.9 6.5 A11.5 11.5 0 0 1 22 6.2 Z" fill="#d93025"/><circle cx="12" cy="12" r="5.3" fill="#fff"/><circle cx="12" cy="12" r="4.2" fill="#1a73e8"/></svg>
<svg class="a" style="left:448px;top:1048px" width="24" height="24" viewBox="0 0 24 24"><defs><linearGradient id="eg" x1="0" y1="1" x2="1" y2="0"><stop offset="0" stop-color="#1550c8"/><stop offset="0.45" stop-color="#1c9ae6"/><stop offset="0.7" stop-color="#35d2b0"/><stop offset="1" stop-color="#7ee860"/></linearGradient></defs><circle cx="12" cy="12" r="11.5" fill="url(#eg)"/><path d="M8 11 Q9 7.5 12.5 8 Q15.5 9 14.5 12 Q17 12.5 18.5 11 Q16 15.5 12 14.5 Q8.5 13.5 8 11 Z" fill="#1e1c21"/><ellipse cx="10.5" cy="12" rx="2.6" ry="2.4" fill="#1e1c21"/></svg>
<svg class="a" style="left:497px;top:1048px" width="24" height="24" viewBox="0 0 24 24"><path d="M12 1.5 A10.5 10.5 0 1 1 5 20 L1.5 22.5 L2.8 18 A10.5 10.5 0 0 1 12 1.5 Z" fill="none" stroke="#25d366" stroke-width="2"/><path d="M7.5 7.5 Q8.5 6 9.5 7 L10.5 9 Q10.5 10 9.5 10.5 Q11 13.5 13.5 14.5 Q14 13.5 15 13.5 L17 14.5 Q17.5 15.5 16 17 Q14 18 10 15 Q6 11 7.5 7.5Z" fill="#25d366"/></svg>
<div class="a" style="left:534px;top:1040px;width:48px;height:40px;background:#3a3839"></div>
<div class="a" style="left:534px;top:1078px;width:48px;height:2px;background:#7ab7e8"></div>
<svg class="a" style="left:546px;top:1049px" width="24" height="22" viewBox="0 0 24 22"><path d="M1 3 H9 L11 5 H23 V20 H1 Z" fill="#f0b429"/><rect x="1" y="7" width="22" height="13" fill="#ffd54f"/><rect x="7" y="13" width="10" height="7" fill="#2d8ad8"/><rect x="9" y="15" width="6" height="2" fill="#ffd54f"/></svg>
<svg class="a" style="left:595px;top:1048px" width="24" height="24" viewBox="0 0 24 24"><path d="M7.5 6 Q7.5 1.5 12 1.5 Q16.5 1.5 16.5 6" stroke="#2196f3" stroke-width="1.6" fill="none"/><rect x="2" y="6" width="20" height="17" rx="2" fill="#fafafa"/><rect x="8" y="10" width="3.6" height="3.6" fill="#f25022"/><rect x="12.4" y="10" width="3.6" height="3.6" fill="#7fba00"/><rect x="8" y="14.4" width="3.6" height="3.6" fill="#00a4ef"/><rect x="12.4" y="14.4" width="3.6" height="3.6" fill="#ffb900"/></svg>
<svg class="a" style="left:644px;top:1048px" width="26" height="24" viewBox="0 0 26 24"><ellipse cx="11.5" cy="9.5" rx="11" ry="6.5" transform="rotate(-22 11.5 9.5)" fill="#f4e8ea"/><path d="M1.5 14 Q3 18 12 16 Q20 13 22 7 Q18 12 10 13 Q4 14 1.5 14Z" fill="#c8a8a8"/><path d="M14 6 L15 15 M19 8 L14 15" stroke="#b8d8f0" stroke-width="1"/><circle cx="15" cy="19" r="2.6" fill="none" stroke="#2a88c8" stroke-width="1.5"/><circle cx="20.5" cy="17" r="2.6" fill="none" stroke="#2a88c8" stroke-width="1.5"/><path d="M15 16.5 L14 12 M19 15 L16 10" stroke="#2a88c8" stroke-width="1.5"/></svg>
<svg class="a" style="left:693px;top:1047px" width="24" height="26" viewBox="0 0 24 26"><defs><linearGradient id="ff" x1="0" y1="1" x2="1" y2="0"><stop offset="0" stop-color="#ff3060"/><stop offset="0.5" stop-color="#ff6a2a"/><stop offset="1" stop-color="#ffd030"/></linearGradient></defs><circle cx="12" cy="14.5" r="11" fill="url(#ff)"/><path d="M14 1 Q22 5 23 14 Q21 8 16 6 Z" fill="#ffd84a"/><path d="M3 5 Q5 3 7 4 Q6 7 4 9 Z" fill="#ff9a30"/><circle cx="12" cy="14.5" r="5" fill="#6a4ae0"/><path d="M7 14 Q8 9 13 9.5" stroke="#ff8a3a" stroke-width="2" fill="none"/></svg>
<svg class="a" style="left:742px;top:1047px" width="24" height="26" viewBox="0 0 24 26"><circle cx="12.5" cy="11.5" r="10" fill="#dfe8e8"/><path d="M8 4 Q14 3 19 6 Q21 10 20 15 Q16 18 12 17 Q13 12 10 9 Q7 7 8 4Z" fill="#3a66c0"/><path d="M4 9 Q7 8 9 11 Q8 15 5 15 Q3 12 4 9Z" fill="#2a4a58"/><path d="M16 6 Q18 9 17 13" stroke="#8ad0a0" stroke-width="1.5" fill="none"/><path d="M5 19 Q9 23 14 22" stroke="#f4f4f4" stroke-width="2" fill="none"/></svg>
<div class="a" style="left:734px;top:1078px;width:40px;height:2px;background:#7ab7e8"></div>
<svg class="a" style="left:1557px;top:1047px" width="30" height="26" viewBox="0 0 30 26"><defs><linearGradient id="cl" x1="0" y1="0" x2="0" y2="1"><stop offset="0" stop-color="#e8f2fc"/><stop offset="1" stop-color="#9cc4ec"/></linearGradient></defs><circle cx="20" cy="9" r="6" fill="#f5a623"/><path d="M5 24 Q0 24 0.5 19.5 Q1 16 5 16 Q6 9.5 13 10 Q18.5 10.5 19.5 15.5 Q24 15 25.5 19 Q26 24 21.5 24 Z" fill="url(#cl)"/></svg>
<div class="a" style="left:1592px;top:1054.15px;font-size:14px;line-height:14px;color:#fff">30°C&nbsp; Berawan</div>
<svg class="a" style="left:1705px;top:1054px" width="14" height="8" viewBox="0 0 14 8"><path d="M1 7 L7 1 L13 7" stroke="#fff" stroke-width="1.3" fill="none"/></svg>
<svg class="a" style="left:1729px;top:1051px" width="15" height="18" viewBox="0 0 15 18"><rect x="2.5" y="5" width="7" height="8" rx="1.5" fill="none" stroke="#fff" stroke-width="1.2"/><path d="M9.5 7 L13 5 V13 L9.5 11" fill="none" stroke="#fff" stroke-width="1.2"/><path d="M3 2 Q7 0 11 2 M3 16 Q7 18 11 16" stroke="#fff" stroke-width="1" fill="none"/></svg>
<svg class="a" style="left:1752px;top:1052px" width="18" height="16" viewBox="0 0 18 16"><rect x="3.5" y="3.5" width="13" height="9" fill="none" stroke="#fff" stroke-width="1.2"/><path d="M10 12.5 V15 M6 15.5 H14" stroke="#fff" stroke-width="1.2"/><rect x="0.5" y="0.5" width="5" height="5" fill="#1e1d22" stroke="#fff" stroke-width="1"/></svg>
<svg class="a" style="left:1777px;top:1052px" width="18" height="16" viewBox="0 0 18 16"><path d="M1 5.5 H4 L8 2 V14 L4 10.5 H1 Z" fill="none" stroke="#fff" stroke-width="1.2"/><path d="M10.5 5.5 Q12 8 10.5 10.5 M12.8 3.5 Q15.5 8 12.8 12.5 M15 1.5 Q19 8 15 14.5" stroke="#fff" stroke-width="1.1" fill="none"/></svg>
<div class="a" style="left:1781.0px;top:1045.84px;width:100px;text-align:center;font-size:12px;line-height:12px;color:#fff">13:34</div>
<div class="a" style="left:1781.0px;top:1063.84px;width:100px;text-align:center;font-size:12px;line-height:12px;color:#fff">31/01/2026</div>
<svg class="a" style="left:1877px;top:1049px" width="24" height="24" viewBox="0 0 24 24"><path d="M2 3 H17 V13 H8 L4 16.5 V13 H2 Z" fill="#fff"/><path d="M5 6 H14 M5 8.5 H14 M5 11 H11" stroke="#1e1d22" stroke-width="1"/><circle cx="15.5" cy="16" r="6" fill="#1e1d22" stroke="#888" stroke-width="1"/><text x="15.5" y="20" text-anchor="middle" font-family="Liberation Sans" font-weight="bold" font-size="11" fill="#fff">2</text></svg>
<div class="a" style="left:1917px;top:1040px;width:3px;height:40px;background:#2a2a2e"></div>
<div class="a" style="left:1916px;top:1040px;width:1px;height:40px;background:#6a6a6a"></div>
</body></html>
